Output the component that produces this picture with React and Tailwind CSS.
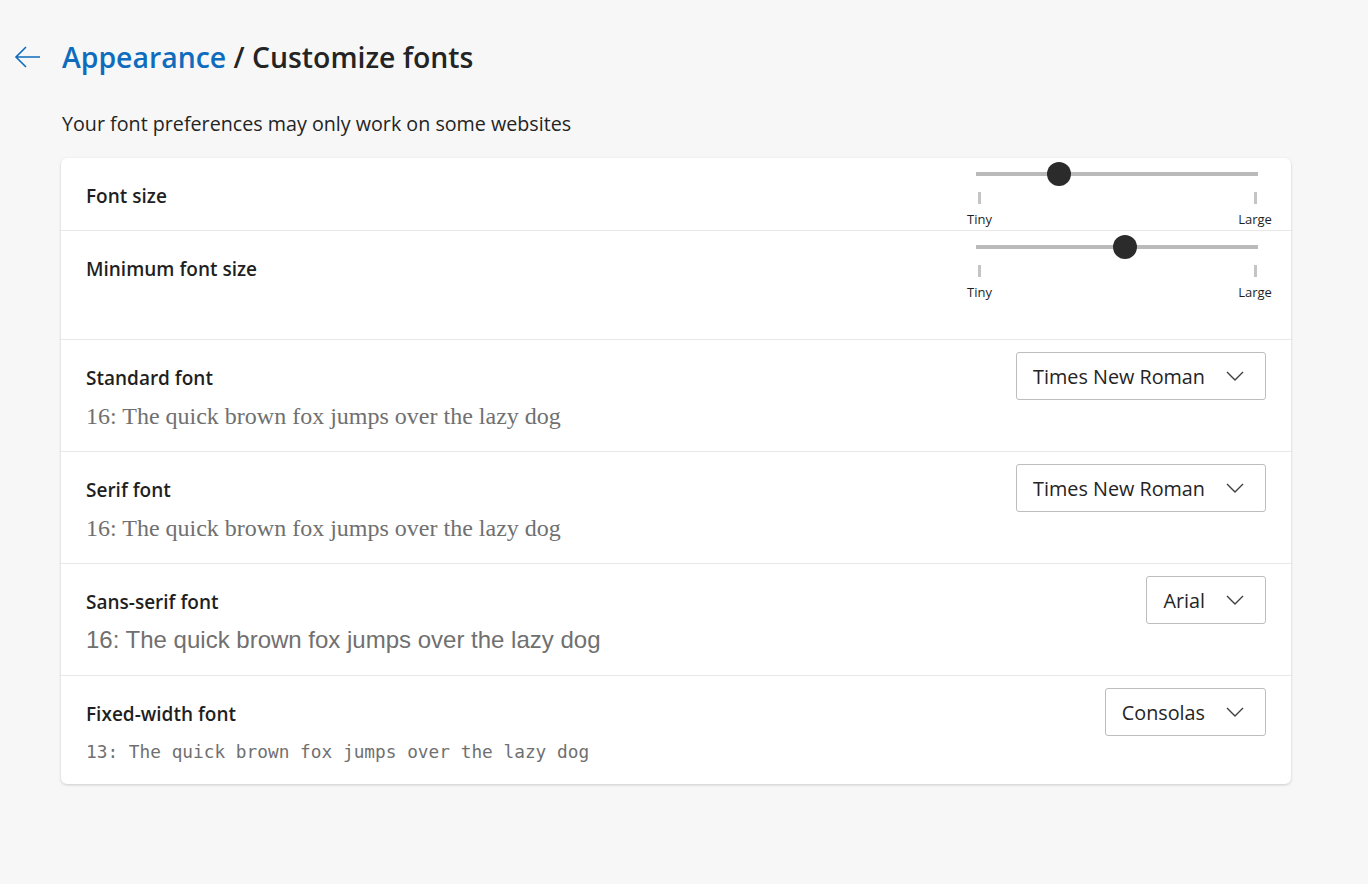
import React from "react";

const ui = { fontFamily: '"Open Sans", "Noto Sans", Arial, sans-serif' };

const Chevron = () => (
  <svg width="18" height="10" viewBox="0 0 18 10" fill="none" stroke="#404040" strokeWidth="1.4">
    <path d="M1 1l8 8 8-8" />
  </svg>
);

const Slider = ({ value }) => {
  return (
    <div className="relative h-[66px] w-[300px]">
      {/* track */}
      <div className="absolute left-[12px] w-[282px] top-[13px] h-[4px] bg-[#bababa]" />
      <div
        className="absolute top-[3px] h-[24px] w-[24px] rounded-full bg-[#2b2b2b]"
        style={{ left: value - 12 }}
      />
      <div className="absolute left-[14px] top-[33px] h-[12px] w-[3px] bg-[#c4c4c4]" />
      <div className="absolute left-[290px] top-[33px] h-[12px] w-[3px] bg-[#c4c4c4]" />
      <div className="absolute left-0 top-[51px] w-[31px] text-center text-[13px] text-[#1f1f1f]">Tiny</div>
      <div className="absolute left-[270px] top-[51px] w-[42px] text-center text-[13px] text-[#1f1f1f]">Large</div>
    </div>
  );
};

const Dropdown = ({ label }) => (
  <div className="flex h-[48px] items-center gap-[21px] rounded-[3px] border border-[#bdbdbd] bg-white pl-[16px] pr-[21px] text-[19.8px] text-[#242424]">
    <span className="pt-[1px]">{label}</span>
    <Chevron />
  </div>
);

const FontRow = ({ label, sample, sampleClass, value, last }) => (
  <div className={`flex justify-between px-[25px] pt-[12px] ${last ? "h-[108px]" : "h-[112px] border-b border-[#e8e8e8]"}`}>
    <div className="pt-[12px]">
      <div className="text-[19px] font-semibold text-[#1f1f1f]">{label}</div>
      <div className={sampleClass}>{sample}</div>
    </div>
    <Dropdown label={value} />
  </div>
);

export default function App() {
  return (
    <div className="min-h-[884px] bg-[#f7f7f7] pt-[36px]" style={ui}>
      <div className="flex items-center">
        <button className="ml-[12px] flex h-[36px] w-[32px] items-center justify-center">
          <svg width="28" height="22" viewBox="0 0 28 22" fill="none" stroke="#0f6cbd" strokeWidth="1.6">
            <path d="M2 11h24M12 1L2 11l10 10" />
          </svg>
        </button>
        <h1 className="ml-[18px] text-[28.4px] font-semibold text-[#242424]">
          <span className="text-[#0f6cbd]">Appearance</span> / Customize fonts
        </h1>
      </div>

      <p className="ml-[62px] mt-[30px] text-[19.7px] text-[#242424]">Your font preferences may only work on some websites</p>

      <div className="ml-[61px] mt-[20px] w-[1230px] rounded-[6px] bg-white shadow-[0_1px_3px_rgba(0,0,0,0.18)]">
        <div className="flex h-[73px] justify-between border-b border-[#e8e8e8] pl-[25px] pr-[27px]">
          <div className="pt-[24px] text-[19px] font-semibold text-[#1f1f1f]">Font size</div>
          <div className="pt-[1px]">
            <Slider value={95} />
          </div>
        </div>
        <div className="flex h-[109px] justify-between border-b border-[#e8e8e8] pl-[25px] pr-[27px]">
          <div className="pt-[24px] text-[19px] font-semibold text-[#1f1f1f]">Minimum font size</div>
          <div className="pt-[1px]">
            <Slider value={161} />
          </div>
        </div>

        <FontRow
          label="Standard font"
          value="Times New Roman"
          sample="16: The quick brown fox jumps over the lazy dog"
          sampleClass="mt-[5px] text-[24px] text-[#707070] [font-family:'Liberation_Serif',serif]"
        />
        <FontRow
          label="Serif font"
          value="Times New Roman"
          sample="16: The quick brown fox jumps over the lazy dog"
          sampleClass="mt-[5px] text-[24px] text-[#707070] [font-family:'Liberation_Serif',serif]"
        />
        <FontRow
          label="Sans-serif font"
          value="Arial"
          sample="16: The quick brown fox jumps over the lazy dog"
          sampleClass="mt-[5px] text-[24px] text-[#707070] [font-family:'Liberation_Sans',Arial,sans-serif]"
        />
        <FontRow
          label="Fixed-width font"
          value="Consolas"
          sample="13: The quick brown fox jumps over the lazy dog"
          sampleClass="mt-[10px] text-[17.8px] text-[#707070] [font-family:'DejaVu_Sans_Mono',monospace]"
          last
        />
      </div>
    </div>
  );
}
